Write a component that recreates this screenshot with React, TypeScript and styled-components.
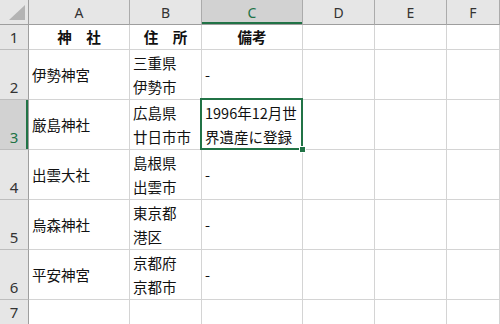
import React from "react";
import styled, { createGlobalStyle, css } from "styled-components";

const GREEN = "#217346";

const GlobalStyle = createGlobalStyle`
  html, body {
    margin: 0;
    padding: 0;
    background: #fff;
  }
  body {
    font-family: "Noto Sans CJK JP", "Noto Sans", sans-serif;
    overflow: hidden;
  }
`;

interface IRow {
  n: number;
  a?: string;
  b?: string[];
  c?: string[];
  head?: boolean;
}

const rows: IRow[] = [
  { n: 1, a: "神　社", b: ["住　所"], c: ["備考"], head: true },
  { n: 2, a: "伊勢神宮", b: ["三重県", "伊勢市"], c: ["-"] },
  { n: 3, a: "厳島神社", b: ["広島県", "廿日市市"], c: ["1996年12月世", "界遺産に登録"] },
  { n: 4, a: "出雲大社", b: ["島根県", "出雲市"], c: ["-"] },
  { n: 5, a: "烏森神社", b: ["東京都", "港区"], c: ["-"] },
  { n: 6, a: "平安神宮", b: ["京都府", "京都市"], c: ["-"] },
  { n: 7 }
];

const columns = ["A", "B", "C", "D", "E", "F"];
const selCol = "C";
const selRow = 3;

export default class App extends React.Component {
  renderRow(row: IRow) {
    const selected = row.n === selRow;
    return (
      <React.Fragment key={row.n}>
        <RowHead $active={selected}>{row.n}</RowHead>
        <Cell $head={row.head}>{row.a}</Cell>
        <Cell $head={row.head}>
          {row.b && row.b.map((t) => <Line key={t}>{t}</Line>)}
        </Cell>
        <Cell $head={row.head} $selected={selected}>
          {row.c && row.c.map((t) => <Line key={t}>{t}</Line>)}
          {selected && <Handle />}
        </Cell>
        <Cell />
        <Cell />
        <Cell />
      </React.Fragment>
    );
  }

  render() {
    return (
      <>
        <GlobalStyle />
        <Sheet>
          <Corner>
            <svg width="28" height="24" viewBox="0 0 28 24">
              <polygon points="9,20 25,20 25,5" fill="#b4b4b4" />
            </svg>
          </Corner>
          {columns.map((c) => (
            <ColHead key={c} $active={c === selCol}>
              {c}
            </ColHead>
          ))}
          {rows.map((r) => this.renderRow(r))}
        </Sheet>
      </>
    );
  }
}

const Sheet = styled.div`
  display: grid;
  grid-template-columns: 29px 101px 72px 101px 72px 72px 1fr;
  grid-template-rows: 25px 25px repeat(5, 50px) 1fr;
  width: 500px;
  height: 324px;
  overflow: hidden;
`;

const Corner = styled.div`
  background: #e6e6e6;
  border-right: 1px solid #9e9e9e;
  border-bottom: 1px solid #9e9e9e;
  svg {
    display: block;
  }
`;

const ColHead = styled.div<{ $active?: boolean }>`
  display: flex;
  align-items: center;
  justify-content: center;
  background: ${(p) => (p.$active ? "#d2d2d2" : "#e6e6e6")};
  border-right: 1px solid #ababab;
  border-bottom: 1px solid #9e9e9e;
  color: ${(p) => (p.$active ? GREEN : "#333")};
  font-family: "Noto Sans", sans-serif;
  font-size: 14px;
  ${(p) =>
    p.$active &&
    css`
      box-shadow: inset 0 -2px 0 ${GREEN};
    `}
`;

const RowHead = styled.div<{ $active?: boolean }>`
  display: flex;
  align-items: flex-end;
  justify-content: center;
  background: ${(p) => (p.$active ? "#d2d2d2" : "#e6e6e6")};
  border-right: 1px solid #9e9e9e;
  border-bottom: 1px solid #bdbdbd;
  color: ${(p) => (p.$active ? GREEN : "#333")};
  font-family: "Noto Sans", sans-serif;
  font-size: 15px;
  line-height: 24px;
  ${(p) =>
    p.$active &&
    css`
      box-shadow: inset -2px 0 0 ${GREEN};
    `}
`;

const Cell = styled.div<{ $head?: boolean; $selected?: boolean }>`
  position: relative;
  display: flex;
  flex-direction: column;
  justify-content: center;
  align-items: ${(p) => (p.$head ? "center" : "flex-start")};
  padding: 0 3px;
  border-right: 1px solid #d4d4d4;
  border-bottom: 1px solid #d4d4d4;
  color: #111;
  font-size: 14.5px;
  font-weight: ${(p) => (p.$head ? 700 : 400)};
  line-height: 24px;
  white-space: nowrap;
  ${(p) =>
    p.$selected &&
    css`
      &::after {
        content: "";
        position: absolute;
        top: -2px;
        left: -2px;
        right: -1px;
        bottom: -1px;
        border: 2px solid ${GREEN};
        pointer-events: none;
      }
    `}
`;

const Line = styled.span`
  display: block;
`;

const Handle = styled.span`
  position: absolute;
  right: -4px;
  bottom: -4px;
  width: 5px;
  height: 5px;
  background: ${GREEN};
  border: 1px solid #fff;
  z-index: 2;
`;
